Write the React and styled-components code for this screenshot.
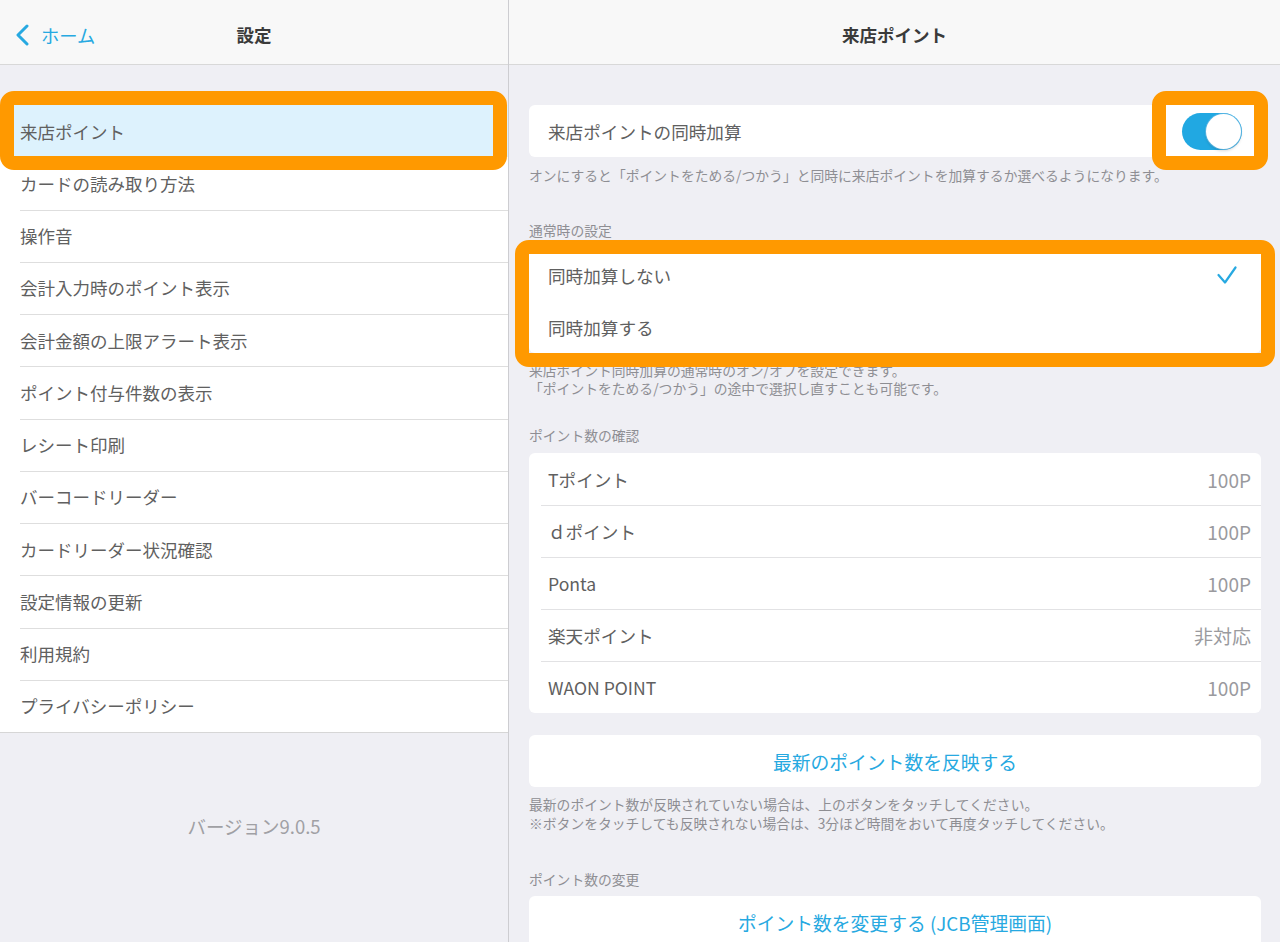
import React from "react";
import styled, { createGlobalStyle } from "styled-components";

const BLUE = "#27a9e1";
const ORANGE = "#ff9900";

const GlobalStyle = createGlobalStyle`
  html, body {
    margin: 0;
    padding: 0;
    background: #efeff4;
  }
  body {
    font-family: "Noto Sans CJK JP", "Noto Sans", sans-serif;
    -webkit-font-smoothing: antialiased;
  }
  * {
    box-sizing: border-box;
  }
`;

const Screen = styled.div`
  display: flex;
  width: 1280px;
  height: 942px;
  overflow: hidden;
  background: #efeff4;
`;

const MasterPane = styled.div`
  width: 509px;
  flex-shrink: 0;
  border-right: 1px solid #cdcdd1;
  display: flex;
  flex-direction: column;
`;

const DetailPane = styled.div`
  flex: 1;
  min-width: 0;
  display: flex;
  flex-direction: column;
`;

const NavBar = styled.div`
  height: 65px;
  padding-top: 6px;
  flex-shrink: 0;
  background: #f8f8f8;
  border-bottom: 1px solid #d8d8d8;
  display: grid;
  grid-template-columns: 1fr auto 1fr;
  align-items: center;
`;

const NavTitle = styled.div`
  grid-column: 2;
  font-size: 17.5px;
  font-weight: 700;
  color: #3a3a3a;
  line-height: 24px;
`;

const BackButton = styled.div`
  grid-column: 1;
  grid-row: 1;
  justify-self: start;
  display: flex;
  align-items: center;
  gap: 11px;
  padding-left: 15px;
  font-size: 18.3px;
  line-height: 24px;
  color: ${BLUE};
`;

const MenuList = styled.div`
  margin-top: 40px;
  background: #fff;
  border-bottom: 1px solid #d6d6d6;
`;

const MenuRow = styled.div`
  position: relative;
  height: 52.25px;
  display: flex;
  align-items: center;
  padding-left: 20px;
  font-size: 17.5px;
  color: #606060;
  background: ${(p) => (p.$active ? "#ddf2fd" : "#fff")};

  & + &::before {
    content: "";
    position: absolute;
    top: 0;
    left: 20px;
    right: 0;
    height: 1px;
    background: #dedede;
  }
`;

const Version = styled.div`
  margin-top: 83px;
  text-align: center;
  font-size: 18.5px;
  line-height: 20px;
  color: #a0a0a4;
`;

const Highlight = styled.div`
  position: absolute;
  inset: ${(p) => p.$inset};
  width: ${(p) => p.$width || "auto"};
  border: 14px solid ${ORANGE};
  border-radius: 14px;
  pointer-events: none;
  z-index: 2;
`;

const Content = styled.div`
  padding: 40px 19px 0 20px;
  display: flex;
  flex-direction: column;
`;

const Card = styled.div`
  position: relative;
  background: #fff;
  border-radius: 6px;
`;

const Cell = styled.div`
  position: relative;
  height: 52px;
  display: flex;
  align-items: center;
  justify-content: space-between;
  padding: 0 ${(p) => p.$padRight ?? 10}px 0 19px;
  font-size: 17.6px;
  color: #606060;

  & + &::before {
    content: "";
    position: absolute;
    top: 0;
    left: 12px;
    right: 0;
    height: 1px;
    background: #e2e2e4;
  }
`;

const Value = styled.span`
  font-size: 19px;
  color: #9a9a9e;
`;

const SectionLabel = styled.div`
  margin: ${(p) => p.$mt}px 0 ${(p) => p.$mb}px;
  font-size: 13.8px;
  line-height: 19px;
  color: #8e8e93;
`;

const Footnote = styled.p`
  margin: ${(p) => p.$mt}px 0 0;
  font-size: 13.8px;
  line-height: ${(p) => p.$lh || 19}px;
  color: #8e8e93;
`;

const ActionButton = styled.div`
  margin-top: ${(p) => p.$mt || 0}px;
  height: 52px;
  flex-shrink: 0;
  background: #fff;
  border-radius: 6px;
  display: flex;
  align-items: center;
  justify-content: center;
  font-size: 18.8px;
  color: ${BLUE};
`;

const Toggle = styled.div`
  width: 60px;
  height: 37px;
  border-radius: 19px;
  background: #21a8e2;
  display: flex;
  align-items: center;
  justify-content: flex-end;
  padding: 1px;
`;

const Knob = styled.div`
  width: 35px;
  height: 35px;
  border-radius: 50%;
  background: #fff;
  box-shadow: 0 0 0 1px rgba(120, 190, 230, 0.6), 0 2px 3px rgba(0, 0, 0, 0.15);
`;

const Chevron = () => (
  <svg width="15" height="22" viewBox="0 0 15 22" fill="none">
    <path d="M12 2 L3 11 L12 20" stroke={BLUE} strokeWidth="3" strokeLinecap="round" strokeLinejoin="round" />
  </svg>
);

const Check = () => (
  <svg width="20" height="20" viewBox="0 0 20 20" fill="none">
    <path d="M1.5 10 L8 17.5 L18.5 2.5" stroke={BLUE} strokeWidth="2.2" strokeLinecap="round" strokeLinejoin="round" />
  </svg>
);

const menuItems = [
  "来店ポイント",
  "カードの読み取り方法",
  "操作音",
  "会計入力時のポイント表示",
  "会計金額の上限アラート表示",
  "ポイント付与件数の表示",
  "レシート印刷",
  "バーコードリーダー",
  "カードリーダー状況確認",
  "設定情報の更新",
  "利用規約",
  "プライバシーポリシー",
];

const points = [
  { name: "Tポイント", value: "100P" },
  { name: "ｄポイント", value: "100P" },
  { name: "Ponta", value: "100P" },
  { name: "楽天ポイント", value: "非対応" },
  { name: "WAON POINT", value: "100P" },
];

export default function App() {
  return (
    <Screen>
      <GlobalStyle />
      <MasterPane>
        <NavBar>
          <BackButton>
            <Chevron />
            ホーム
          </BackButton>
          <NavTitle>設定</NavTitle>
        </NavBar>
        <MenuList>
          {menuItems.map((label, i) => (
            <MenuRow key={label} $active={i === 0}>
              {label}
              {i === 0 && <Highlight $inset="-14px 1px -13px 0" />}
            </MenuRow>
          ))}
        </MenuList>
        <Version>バージョン9.0.5</Version>
      </MasterPane>

      <DetailPane>
        <NavBar>
          <NavTitle>来店ポイント</NavTitle>
        </NavBar>
        <Content>
          <Card>
            <Cell $padRight={19}>
              来店ポイントの同時加算
              <Toggle>
                <Knob />
              </Toggle>
            </Cell>
            <Highlight $inset="-14px -7px -13px auto" $width="116px" />
          </Card>
          <Footnote $mt={9}>
            オンにすると「ポイントをためる/つかう」と同時に来店ポイントを加算するか選べるようになります。
          </Footnote>

          <SectionLabel $mt={36} $mb={9}>通常時の設定</SectionLabel>
          <Card>
            <Cell $padRight={24}>
              同時加算しない
              <Check />
            </Cell>
            <Cell>同時加算する</Cell>
            <Highlight $inset="-9px -14px -14px -14px" />
          </Card>
          <Footnote $mt={8} $lh={18}>
            来店ポイント同時加算の通常時のオン/オフを設定できます。
            <br />
            「ポイントをためる/つかう」の途中で選択し直すことも可能です。
          </Footnote>

          <SectionLabel $mt={29} $mb={8}>ポイント数の確認</SectionLabel>
          <Card>
            {points.map((p) => (
              <Cell key={p.name}>
                {p.name}
                <Value>{p.value}</Value>
              </Cell>
            ))}
          </Card>

          <ActionButton $mt={22}>最新のポイント数を反映する</ActionButton>
          <Footnote $mt={8}>
            最新のポイント数が反映されていない場合は、上のボタンをタッチしてください。
            <br />
            ※ボタンをタッチしても反映されない場合は、3分ほど時間をおいて再度タッチしてください。
          </Footnote>

          <SectionLabel $mt={37} $mb={7}>ポイント数の変更</SectionLabel>
          <ActionButton>ポイント数を変更する (JCB管理画面)</ActionButton>
        </Content>
      </DetailPane>
    </Screen>
  );
}
